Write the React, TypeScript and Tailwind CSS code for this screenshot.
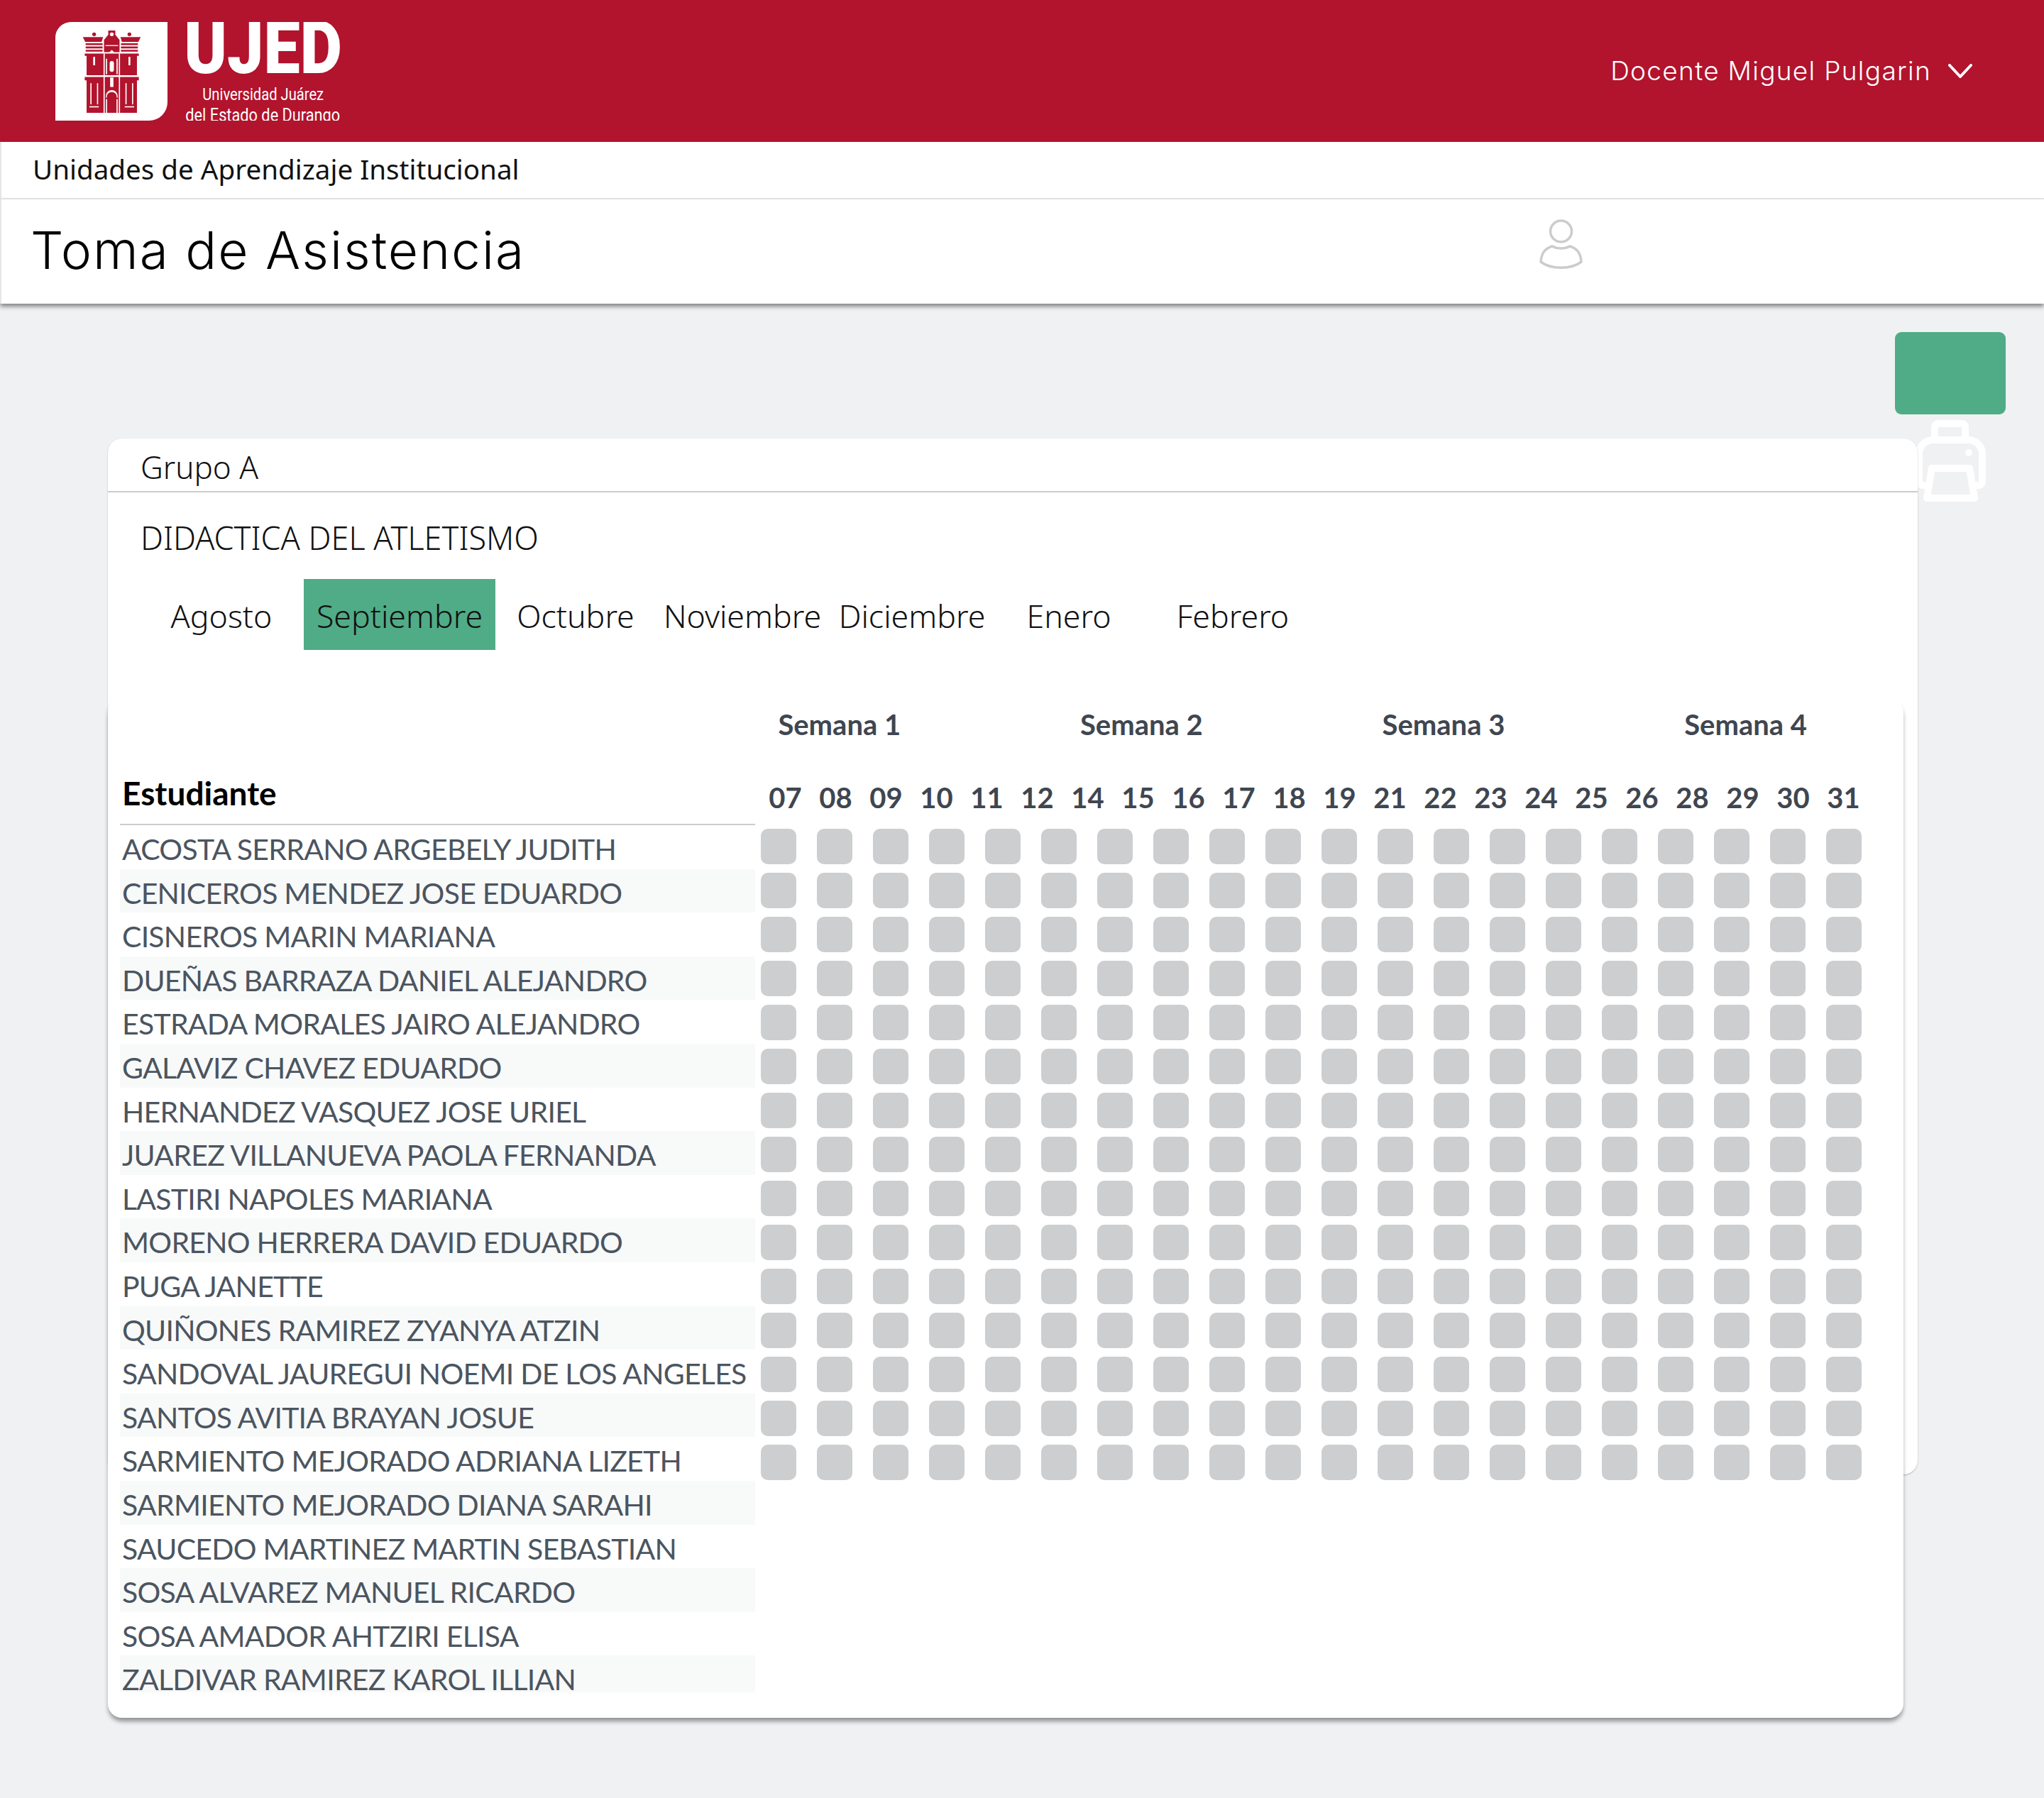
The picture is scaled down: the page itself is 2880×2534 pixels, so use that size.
const students = [
  "ACOSTA SERRANO ARGEBELY JUDITH",
  "CENICEROS MENDEZ JOSE EDUARDO",
  "CISNEROS MARIN MARIANA",
  "DUEÑAS BARRAZA DANIEL ALEJANDRO",
  "ESTRADA MORALES JAIRO ALEJANDRO",
  "GALAVIZ CHAVEZ EDUARDO",
  "HERNANDEZ VASQUEZ JOSE URIEL",
  "JUAREZ VILLANUEVA PAOLA FERNANDA",
  "LASTIRI NAPOLES MARIANA",
  "MORENO HERRERA DAVID EDUARDO",
  "PUGA JANETTE",
  "QUIÑONES RAMIREZ ZYANYA ATZIN",
  "SANDOVAL JAUREGUI NOEMI DE LOS ANGELES",
  "SANTOS AVITIA BRAYAN JOSUE",
  "SARMIENTO MEJORADO ADRIANA LIZETH",
  "SARMIENTO MEJORADO DIANA SARAHI",
  "SAUCEDO MARTINEZ MARTIN SEBASTIAN",
  "SOSA ALVAREZ MANUEL RICARDO",
  "SOSA AMADOR AHTZIRI ELISA",
  "ZALDIVAR RAMIREZ KAROL ILLIAN",
];

const days = ["07", "08", "09", "10", "11", "12", "14", "15", "16", "17", "18", "19", "21", "22", "23", "24", "25", "26", "28", "29", "30", "31"];

const months = [
  { name: "Agosto", width: "w-[232px]" },
  { name: "Septiembre", width: "w-[270px]", active: true },
  { name: "Octubre", width: "w-[226px]" },
  { name: "Noviembre", width: "w-[244px]" },
  { name: "Diciembre", width: "w-[234px]" },
  { name: "Enero", width: "w-[208px]" },
  { name: "Febrero", width: "w-[254px]" },
];

function Building() {
  return (
    <svg viewBox="0 0 250 350" className="w-[83px] h-[116px]">
      <g fill="#b2132d">
        <circle cx="50" cy="16" r="8" />
        <circle cx="200" cy="16" r="8" />
        <path d="M2 28H88L82 48H12ZM162 28H248L238 48H168Z" />
        <path d="M14 54H86V62H14ZM14 68H86V76H14ZM14 82H86V90H14ZM164 54H236V62H164ZM164 68H236V76H164ZM164 82H236V90H164Z" />
        <path d="M110 0H140V18L158 40V92H92V40L110 18Z" />
        <path d="M10 98H240V108H232V190H18V108H10Z" />
        <path d="M10 198H240V212H232V350H18V212H10Z" />
      </g>
      <g fill="#fff">
        <circle cx="125" cy="16" r="8" />
        <rect x="98" y="62" width="54" height="4" />
        <path d="M125 82L138 96H112Z" />
        <rect x="46" y="112" width="8" height="36" />
        <rect x="196" y="112" width="8" height="36" />
        <rect x="90" y="98" width="5" height="252" />
        <rect x="155" y="98" width="5" height="252" />
        <rect x="100" y="120" width="5" height="66" />
        <rect x="145" y="120" width="5" height="66" />
        <rect x="116" y="130" width="18" height="46" rx="9" />
        <rect x="34" y="224" width="5" height="90" />
        <rect x="62" y="224" width="5" height="90" />
        <rect x="183" y="224" width="5" height="90" />
        <rect x="211" y="224" width="5" height="90" />
        <rect x="30" y="322" width="40" height="5" />
        <rect x="180" y="322" width="40" height="5" />
        <rect x="118" y="200" width="14" height="40" />
        <path d="M100 280C100 245 150 245 150 280V286H146V282C146 255 104 255 104 282V286H100Z" />
        <rect x="100" y="292" width="5" height="58" />
        <rect x="145" y="292" width="5" height="58" />
      </g>
      <circle cx="50" cy="158" r="9" fill="#b2132d" />
      <circle cx="200" cy="158" r="9" fill="#b2132d" />
    </svg>
  );
}

function PersonIcon() {
  return (
    <svg viewBox="0 0 61 71" fill="none" stroke="#cccccc" strokeWidth="3.5" className="w-[61px] h-[71px]">
      <circle cx="30.5" cy="17" r="15" />
      <path d="M2 60C3 46 9 41 18 38C25 42 36 42 43 38C52 41 58 46 59 60C45 71 16 71 2 60Z" strokeLinejoin="round" />
    </svg>
  );
}

function PrinterIcon() {
  return (
    <svg viewBox="0 0 99 115" fill="none" stroke="#ffffff" strokeWidth="10" strokeLinejoin="round" className="w-[99px] h-[115px]">
      <path d="M27 26V10Q27 5 32 5H65Q70 5 70 10V26" />
      <path d="M18 92H11Q5 92 5 86V48C5 36 14 28 26 28H73C85 28 94 36 94 48V86Q94 92 88 92H81" />
      <path d="M23 68H76L83 110H16Z" />
      <circle cx="75" cy="46" r="5" fill="#ffffff" stroke="none" />
    </svg>
  );
}

export default function App() {
  return (
    <div className="w-[2880px] h-[2534px] bg-[#f0f1f3] overflow-hidden font-['Lato',sans-serif]">
      <header className="h-[200px] bg-[#b2132d] flex justify-between items-center text-white">
        <div className="ml-[78px] pr-[60px] flex h-[139px] gap-[27px] overflow-hidden">
          <div className="w-[158px] h-[139px] bg-white rounded-tl-[22px] rounded-br-[26px] flex justify-center pt-[12px]">
            <Building />
          </div>
          <div className="w-[215px] flex flex-col items-center">
            <div className="font-['Roboto',sans-serif] font-black text-[104px] leading-[74px] whitespace-nowrap scale-x-[0.88]">UJED</div>
            <div className="mt-[14px] font-['Roboto',sans-serif] text-[24px] leading-[29px] whitespace-nowrap scale-x-[0.84]">Universidad Juárez</div>
            <div className="font-['Roboto',sans-serif] text-[25px] leading-[29px] whitespace-nowrap scale-x-[0.87]">del Estado de Durango</div>
          </div>
        </div>
        <div className="flex items-center mr-[101px] gap-[24px]">
          <span className="font-['Inter',sans-serif] font-light text-[37px] tracking-[1.3px] leading-none -mt-[2px]">Docente Miguel Pulgarin</span>
          <svg viewBox="0 0 34 20" fill="none" stroke="#ffffff" strokeWidth="4" strokeLinecap="round" className="w-[34px] h-[20px]">
            <path d="M2 2L17 18L32 2" />
          </svg>
        </div>
      </header>

      <div className="h-[81px] bg-white border-b-2 border-l-2 border-[#e6e6e6] pl-[44px] flex items-center">
        <span className="font-['Noto_Sans',sans-serif] text-[38.6px] leading-[50px] -mt-[3px] text-[#111111]">Unidades de Aprendizaje Institucional</span>
      </div>

      <div className="h-[147px] bg-white border-l-2 border-[#e6e6e6] flex items-center justify-between shadow-[0_4px_6px_rgba(0,0,0,0.45)] relative">
        <h1 className="pl-[41px] -mt-[4px] font-['Inter',sans-serif] font-light text-[73px] tracking-[2px] text-black">Toma de Asistencia</h1>
        <div className="mr-[650px] mb-[20px]">
          <PersonIcon />
        </div>
      </div>

      <div className="pt-[40px]">
        <div className="flex justify-end pr-[54px]">
          <div className="w-[156px] flex flex-col items-center">
            <div className="w-[156px] h-[116px] bg-[#50ac87] rounded-[9px]" />
            <div className="mt-[8px] ml-[1px]">
              <PrinterIcon />
            </div>
          </div>
        </div>

        <section className="relative ml-[152px] -mt-[89px] w-[2550px] h-[1460px] bg-white rounded-[20px] shadow-[0_1px_2px_rgba(0,0,0,0.25)]">
          <div className="h-[76px] border-b-2 border-[#cccccc] pl-[46px] pt-[5px] flex items-center">
            <span className="font-['Noto_Sans',sans-serif] font-light text-[44px] text-[#111111]">Grupo A</span>
          </div>
          <div className="pl-[46px] pt-[36px] h-[122px] font-['Noto_Sans',sans-serif] font-light text-[45px] leading-[56px] text-[#111111]">DIDACTICA DEL ATLETISMO</div>
          <div className="flex ml-[44px] h-[100px] font-['Noto_Sans',sans-serif] font-light text-[44.7px] text-[#111111]">
            {months.map((m) => (
              <div key={m.name} className={`${m.width} flex items-center justify-center pt-[3px] ${m.active ? "bg-[#50ac87]" : ""}`}>
                {m.name}
              </div>
            ))}
          </div>

          <div className="mt-[68px] w-[2530px] h-[1437px] bg-white rounded-[20px] shadow-[0_6px_6px_-1px_rgba(0,0,0,0.4)]">
            <div className="flex h-[74px] ml-[818px] items-center font-bold text-[40px] text-[#3f4650]">
              {[1, 2, 3, 4].map((n) => (
                <div key={n} className="w-[425.6px] text-center">Semana {n}</div>
              ))}
            </div>
            <div className="flex ml-[17px]">
              <div className="w-[895px]">
                <div className="h-[105px] border-b-2 border-[#cccccc] font-bold text-[46px] leading-[48px] pl-[3px] pt-[36px] text-black">Estudiante</div>
                {students.map((s, i) => (
                  <div
                    key={s}
                    className={`${i === 19 ? "h-[52px]" : "h-[61.6px]"} pl-[3px] text-[41px] tracking-[-0.75px] leading-[68px] whitespace-nowrap text-[#4b5560] overflow-hidden ${i % 2 === 1 ? "bg-[#f8f9f9]" : ""}`}
                  >
                    {s}
                  </div>
                ))}
              </div>
              <div>
                <div className="h-[110px] flex pl-[7px] pt-[42px] font-bold text-[40px] leading-[48px] text-[#3f4650]">
                  {days.map((d) => (
                    <div key={d} className="w-[71px] text-center">{d}</div>
                  ))}
                </div>
                <div className="pl-[8px] grid grid-cols-[repeat(20,50px)] gap-x-[29px] gap-y-[12px]">
                  {Array.from({ length: 300 }).map((_, i) => (
                    <div key={i} className="w-[50px] h-[50px] rounded-[10px] bg-[#cdced0]" />
                  ))}
                </div>
              </div>
            </div>
          </div>
        </section>
      </div>
    </div>
  );
}
